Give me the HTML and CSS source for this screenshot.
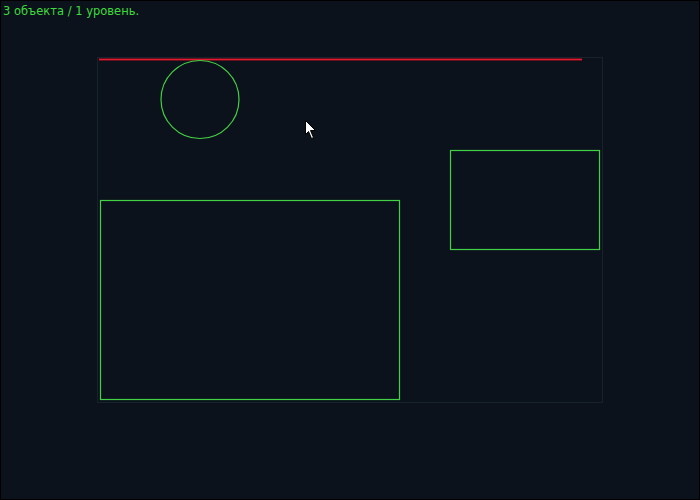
FILE: index.html
```html
<!DOCTYPE html>
<html lang="ru">
<head>
    <meta charset="UTF-8">
    <title>Редактор уровня</title>
    <link rel="stylesheet" href="styles.css">
</head>
<body>
    <div class="screen">
        <div class="status">3 объекта / 1 уровень.</div>

        <div class="board">
            <!-- level objects, coordinates are board-local -->
            <svg class="scene" width="504" height="344" viewBox="0 0 504 344">
                <line class="limit-glow" x1="1" y1="1.5" x2="484" y2="1.5"/>
                <line class="limit" x1="1" y1="1.5" x2="484" y2="1.5"/>
                <circle class="shape" cx="102" cy="41.5" r="39"/>
                <rect class="shape" x="352.5" y="92.5" width="149" height="99"/>
                <rect class="shape" x="2.5" y="142.5" width="299" height="199"/>
            </svg>
            <!-- mouse pointer -->
            <svg class="pointer" width="14" height="20" viewBox="0 0 14 20">
                <path d="M0.5 0.5 L0.5 14.5 L3.5 11.5 L6.5 18.5 L8.5 17.5 L5.5 10.5 L10.5 10.5 Z"/>
            </svg>
        </div>
    </div>
</body>
</html>
```

FILE: styles.css
```css
* {
    margin: 0;
    padding: 0;
    box-sizing: border-box;
}

body {
    background: #000;
}

.screen {
    width: 700px;
    height: 500px;
    border: 1px solid #000;
    background: #0b121c;
    font-family: 'DejaVu Sans', sans-serif;
}

.status {
    color: #3ddc3d;
    font-size: 11.5px;
    line-height: 14px;
    padding: 3px 0 0 2px;
}

/* level area */
.board {
    position: relative;
    width: 506px;
    height: 346px;
    margin: 39px 0 0 96px;
    border: 1px solid #18222d;
}

.scene {
    display: block;
}

/* top limit line: bright core over a dim red band */
.limit-glow {
    stroke: #6a0f1c;
    stroke-width: 3;
}

.limit {
    stroke: #e01c32;
    stroke-width: 1;
}

.shape {
    fill: none;
    stroke: #44d044;
    stroke-width: 1.2;
}

.pointer {
    position: absolute;
    left: 207px;
    top: 62px;
}

.pointer path {
    fill: #fff;
    stroke: #000;
    stroke-width: 1;
}
```
